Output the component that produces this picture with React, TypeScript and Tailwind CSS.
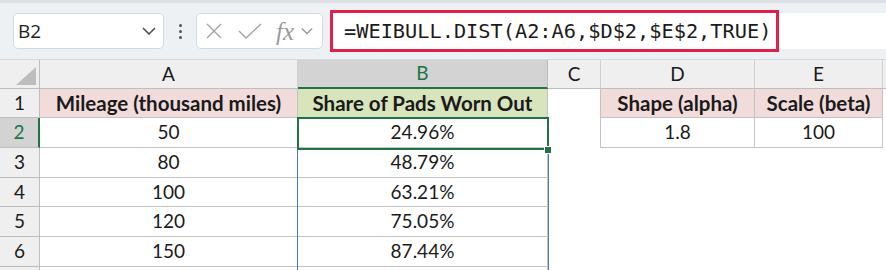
import React from "react";

const cellFont = { fontFamily: "Lato, 'Open Sans', sans-serif" };

type Cell = { text: string; kind?: "pink" | "green" | "plain" | "none" };

const rows: Cell[][] = [
  [
    { text: "Mileage (thousand miles)", kind: "pink" },
    { text: "Share of Pads Worn Out", kind: "green" },
    { text: "", kind: "none" },
    { text: "Shape (alpha)", kind: "pink" },
    { text: "Scale (beta)", kind: "pink" },
  ],
  [{ text: "50" }, { text: "24.96%" }, { text: "", kind: "none" }, { text: "1.8" }, { text: "100" }],
  [{ text: "80" }, { text: "48.79%" }, { text: "", kind: "none" }, { text: "", kind: "none" }, { text: "", kind: "none" }],
  [{ text: "100" }, { text: "63.21%" }, { text: "", kind: "none" }, { text: "", kind: "none" }, { text: "", kind: "none" }],
  [{ text: "120" }, { text: "75.05%" }, { text: "", kind: "none" }, { text: "", kind: "none" }, { text: "", kind: "none" }],
  [{ text: "150" }, { text: "87.44%" }, { text: "", kind: "none" }, { text: "", kind: "none" }, { text: "", kind: "none" }],
];

function Chevron({ className }: { className?: string }) {
  return (
    <svg width="14" height="8" viewBox="0 0 14 8" className={className}>
      <path d="M1 1l6 6 6-6" fill="none" stroke="currentColor" strokeWidth="1.6" />
    </svg>
  );
}

function Toolbar() {
  return (
    <div className="relative h-[60px] bg-[#eef1f4]">
      <div className="h-[3px] bg-[#dde1e5]" />
      <div className="flex items-start pl-[13px] pt-[10px]">
        <div className="flex h-[36px] w-[151px] items-center justify-between rounded-[5px] border border-[#d6dadf] bg-white pl-[4px] pr-[7px]">
          <span className="text-[19px] text-[#1f1f1f]" style={{ fontFamily: "'Open Sans', sans-serif" }}>
            B2
          </span>
          <Chevron className="text-[#4a4f55]" />
        </div>
        <div className="flex h-[36px] w-[32px] flex-col items-center justify-center gap-[3px]">
          <span className="h-[3px] w-[3px] rounded-full bg-[#4c5560]" />
          <span className="h-[3px] w-[3px] rounded-full bg-[#4c5560]" />
          <span className="h-[3px] w-[3px] rounded-full bg-[#4c5560]" />
        </div>
        <div className="flex h-[36px] w-[127px] items-center rounded-[5px] border border-[#d6dadf] bg-white pl-[8px]">
          <svg width="18" height="18" viewBox="0 0 18 18" className="text-[#a3a3a3]">
            <path d="M2 2l14 14M16 2L2 16" stroke="currentColor" strokeWidth="1.4" fill="none" />
          </svg>
          <svg width="24" height="16" viewBox="0 0 24 16" className="ml-[15px] text-[#a3a3a3]">
            <path d="M1 8l7 7L23 1" stroke="currentColor" strokeWidth="1.4" fill="none" />
          </svg>
          <span
            className="ml-[14px] text-[25px] italic leading-none text-[#9a9a9a]"
            style={{ fontFamily: "'Liberation Serif', serif" }}
          >
            fx
          </span>
          <Chevron className="ml-[7px] w-[12px] text-[#9a9a9a]" />
        </div>
        <div className="ml-[7px] flex h-[36px] flex-1 items-center bg-white">
          <div className="-my-[3px] flex h-[42px] w-[449px] items-center border-[3px] border-[#e0204a] pl-[11px]">
            <span
              className="text-[20.3px] leading-none text-[#1b1b1b]"
              style={{ fontFamily: "'DejaVu Sans Mono', 'Liberation Mono', monospace" }}
            >
              =WEIBULL.DIST(A2:A6,$D$2,$E$2,TRUE)
            </span>
          </div>
        </div>
      </div>
      <div className="absolute bottom-0 left-0 right-0 h-px bg-[#d5d8dc]" />
    </div>
  );
}

function Grid() {
  const letters = ["A", "B", "C", "D", "E"];
  return (
    <div className="relative" style={cellFont}>
      <div className="grid grid-cols-[40px_258px_250px_53px_154px_128px_3px] grid-rows-[29px_29px_30px_30px_29px_30px_30px_3px] text-[19px] text-[#1a1a1a]">
        {/* header row */}
        <div className="relative border-b border-r border-[#bdbdbd] bg-[#efefef]">
          <svg width="20" height="18" viewBox="0 0 20 18" className="absolute left-[16px] top-[7px]">
            <path d="M20 0V18H0Z" fill="#bdbdbd" />
          </svg>
        </div>
        {letters.map((l) => (
          <div
            key={l}
            className={
              l === "B"
                ? "flex items-center justify-center border-b-2 border-r border-b-[#217346] border-r-[#bdbdbd] bg-[#d3d3d3] text-[#217346]"
                : "flex items-center justify-center border-b border-r border-[#d0d0d0] border-b-[#bdbdbd] bg-[#efefef]"
            }
          >
            {l}
          </div>
        ))}
        <div className="border-b border-[#bdbdbd] bg-[#efefef]" />

        {rows.map((r, ri) => (
          <React.Fragment key={ri}>
            <div
              className={
                ri === 1
                  ? "flex items-center justify-center border-b border-r-2 border-b-[#bdbdbd] border-r-[#217346] bg-[#d3d3d3] text-[#217346]"
                  : "flex items-center justify-center border-b border-r border-[#bdbdbd] bg-[#efefef]"
              }
            >
              {ri + 1}
            </div>
            {r.map((c, ci) => {
              const bordered = c.kind !== "none";
              const cRight = ci === 2 && ri < 2;
              let cls = "flex items-center justify-center";
              if (bordered) cls += " border-b border-r border-[#c3c3c3]";
              if (cRight) cls += " border-r border-[#c3c3c3]";
              if (c.kind === "pink") cls += " bg-[#f2dcdb] text-[20.5px] font-bold";
              if (c.kind === "green") cls += " bg-[#d8e4bc] text-[20.5px] font-bold";
              return (
                <div key={ci} className={cls}>
                  {c.text}
                </div>
              );
            })}
            <div />
          </React.Fragment>
        ))}
        <div className="border-r border-[#bdbdbd] bg-[#efefef]" />
        <div className="border-r border-[#c3c3c3]" />
        <div className="border-r border-[#c3c3c3]" />
        <div />
        <div />
        <div />
        <div />
      </div>

      {/* reference range B2:B6 */}
      <div className="pointer-events-none absolute left-[297px] top-[58px] h-[209px] w-[252px] border-[1.5px] border-[#4a76c6]" />
      {/* active cell B2 */}
      <div className="pointer-events-none absolute left-[297px] top-[57px] h-[33px] w-[252px] border-2 border-[#217346]" />
      <div className="pointer-events-none absolute left-[544px] top-[86px] h-[8px] w-[8px] border border-white bg-[#217346]" />
    </div>
  );
}

export default function App() {
  return (
    <div className="h-[270px] w-[886px] overflow-hidden bg-white">
      <Toolbar />
      <Grid />
    </div>
  );
}
